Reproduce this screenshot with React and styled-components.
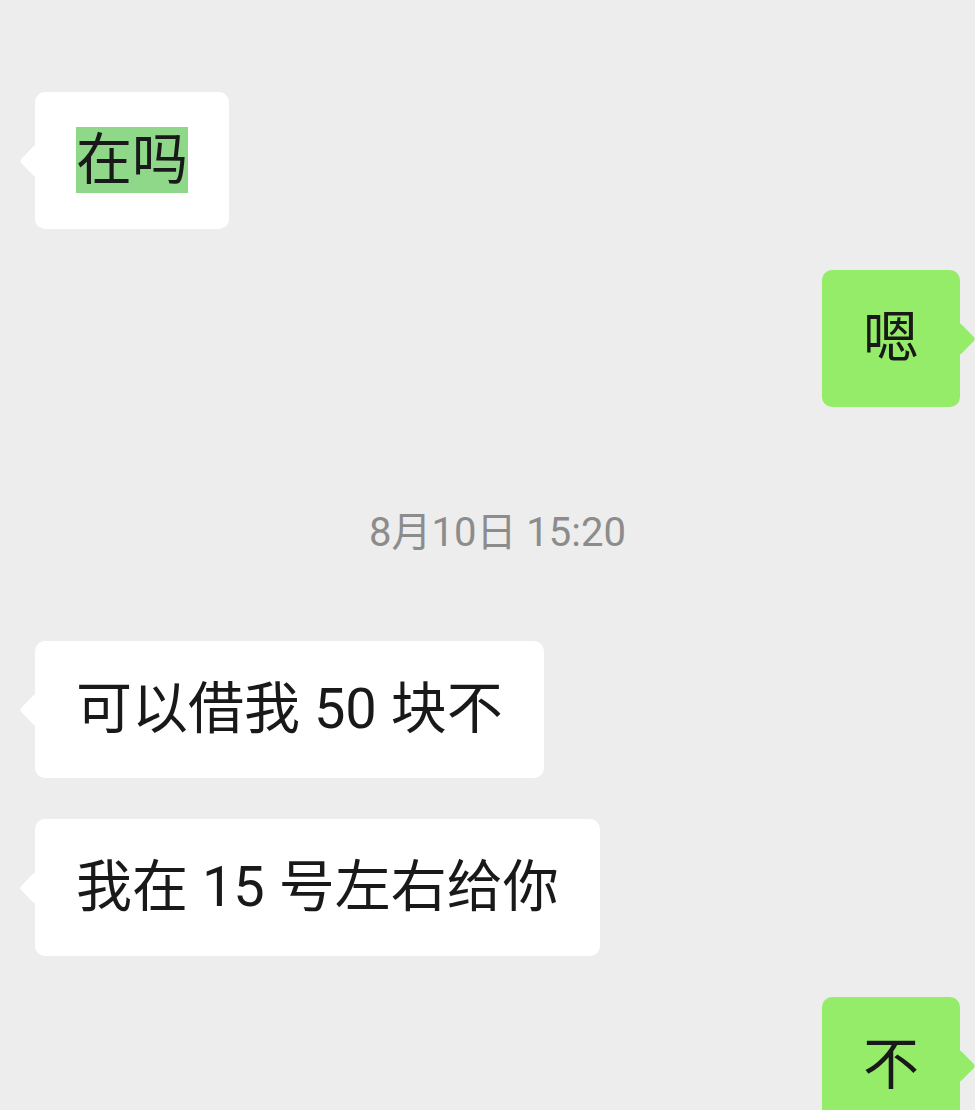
import React from "react";
import styled, { createGlobalStyle, css } from "styled-components";

const GlobalStyle = createGlobalStyle`
  html, body {
    margin: 0;
    padding: 0;
    background: #ededed;
  }
  body {
    font-family: "Noto Sans CJK SC", "Noto Sans", sans-serif;
  }
`;

const Screen = styled.div`
  width: 975px;
  height: 1110px;
  overflow: hidden;
  background: #ededed;
  display: flex;
  flex-direction: column;
  gap: 41px;
  padding: 92px 15px 0 35px;
  box-sizing: border-box;
`;

const Row = styled.div`
  display: flex;
  justify-content: ${p => (p.$mine ? "flex-end" : "flex-start")};
`;

const Bubble = styled.div`
  position: relative;
  padding: 30px 41px;
  border-radius: 10px;
  font-family: Roboto, "Noto Sans CJK SC", sans-serif;
  font-size: 56px;
  line-height: 77px;
  color: #191919;
  white-space: nowrap;
  background: ${p => (p.$mine ? "#95ec69" : "#ffffff")};

  &::before {
    content: "";
    position: absolute;
    top: 50%;
    width: 24px;
    height: 24px;
    border-radius: 4px;
    background: inherit;
    transform: translateY(-50%) rotate(45deg);
    ${p =>
      p.$mine
        ? css`
            right: -11px;
          `
        : css`
            left: -11px;
          `}
  }
`;

const Highlight = styled.span`
  background: #8fd88a;
`;

const Time = styled.div`
  text-align: center;
  font-family: Roboto, "Noto Sans CJK SC", sans-serif;
  font-size: 40px;
  line-height: 56px;
  color: #8c8c8c;
  margin: 57px 0 39px;
`;

const App = () => (
  <>
    <GlobalStyle />
    <Screen>
      <Row>
        <Bubble>
          <Highlight>在吗</Highlight>
        </Bubble>
      </Row>
      <Row $mine>
        <Bubble $mine>嗯</Bubble>
      </Row>
      <Time>8月10日 15:20</Time>
      <Row>
        <Bubble>可以借我 50 块不</Bubble>
      </Row>
      <Row>
        <Bubble>我在 15 号左右给你</Bubble>
      </Row>
      <Row $mine>
        <Bubble $mine>不</Bubble>
      </Row>
    </Screen>
  </>
);

export default App;
